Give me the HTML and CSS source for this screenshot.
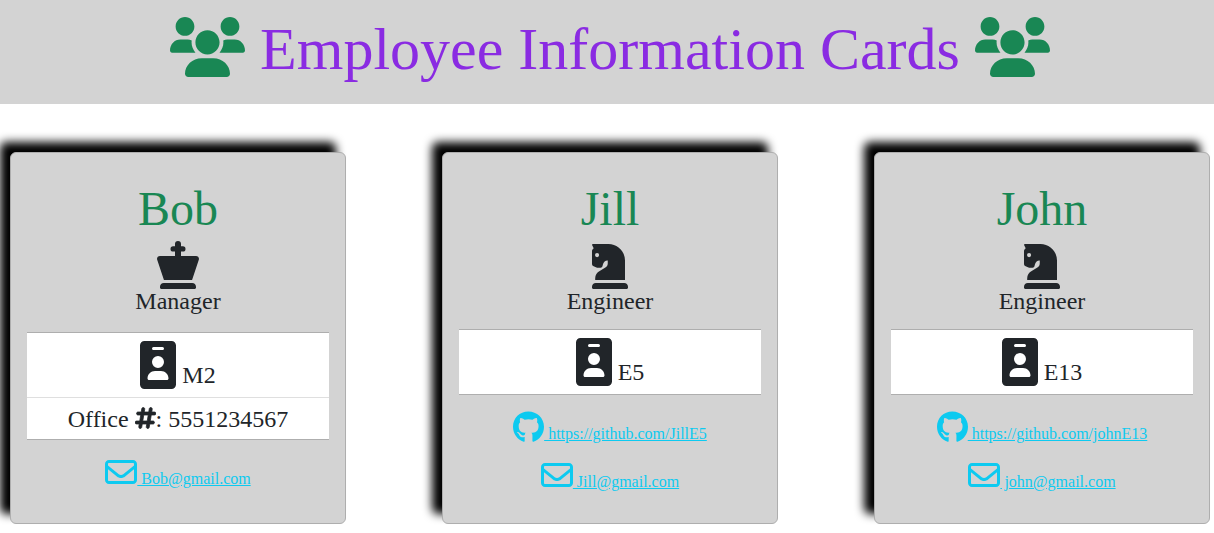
FILE: index.html
```html
<!DOCTYPE html>
<html lang="en">
<head>
<meta charset="utf-8">
<meta name="viewport" content="width=device-width, initial-scale=1">
<title>Employee Information Cards</title>
<link rel="stylesheet" href="styles.css">
</head>
<body>
<svg class="sprite" aria-hidden="true">
  <symbol id="users" viewBox="0 0 640 512"><path d="M319.9 320c57.41 0 103.1-46.56 103.1-104c0-57.44-46.54-104-103.1-104c-57.41 0-103.1 46.56-103.1 104C215.9 273.4 262.5 320 319.9 320zM369.9 352H270.1C191.6 352 128 411.7 128 485.3C128 500.1 140.7 512 156.4 512h327.2C499.3 512 512 500.1 512 485.3C512 411.7 448.4 352 369.9 352zM512 160c44.18 0 80-35.82 80-80S556.2 0 512 0c-44.18 0-80 35.82-80 80S467.8 160 512 160zM183.9 216c0-5.449 .9824-10.63 1.609-15.91C174.6 194.1 162.6 192 149.9 192H88.08C39.44 192 0 233.8 0 285.3C0 295.6 7.887 304 17.62 304h199.5C196.7 280.2 183.9 249.7 183.9 216zM128 160c44.18 0 80-35.82 80-80S172.2 0 128 0C83.82 0 48 35.82 48 80S83.82 160 128 160zM551.9 192h-61.84c-12.8 0-24.88 3.037-35.86 8.24C454.8 205.5 455.8 210.6 455.8 216c0 33.71-12.78 64.21-33.16 88h199.7C632.1 304 640 295.6 640 285.3C640 233.8 600.6 192 551.9 192z"/></symbol>
  <symbol id="king" viewBox="0 0 448 512"><path d="M192 160V112H172a28 28 0 0 1 0-56H192V32a32 32 0 0 1 64 0V56H276a28 28 0 0 1 0 56H256V160H416C438 160 453 180 446 201L374 416H74L2 201C-5 180 10 160 32 160zM72 448H376C398 448 416 466 416 488V496C416 505 409 512 400 512H48C39 512 32 505 32 496V488C32 466 50 448 72 448z"/></symbol>
  <symbol id="knight" viewBox="0 0 384 512"><path fill-rule="evenodd" d="M8 32H176C274 32 352 110 352 208V416H34V396C34 364 52 336 82 320L130 290C156 276 168 262 168 240V208C144 206 124 222 118 246L112 266C109 277 102 283 92 286H66C58 286 50 285 42 281L12 267C4 263 0 256 0 246V106C0 98 3 93 8 88L18 78L2 46C0 40 2 32 8 32zM54 128a22 22 0 1 0 0 44a22 22 0 1 0 0-44zM40 448H344C366 448 384 466 384 488V496C384 505 377 512 368 512H16C7 512 0 505 0 496V488C0 466 18 448 40 448z"/></symbol>
  <symbol id="badge" viewBox="0 0 384 512"><path fill-rule="evenodd" d="M48 0H336C363 0 384 21 384 48V464C384 491 363 512 336 512H48C21 512 0 491 0 464V48C0 21 21 0 48 0zM144 64a16 16 0 0 0 0 32H240a16 16 0 0 0 0-32zM192 160a64 64 0 1 0 0 128a64 64 0 1 0 0-128zM160 320c-44.2 0-80 35.8-80 80c0 8.8 7.2 16 16 16H288c8.8 0 16-7.2 16-16c0-44.2-35.8-80-80-80z"/></symbol>
  <symbol id="hash" viewBox="0 0 448 512"><path stroke="currentColor" stroke-width="16" d="M181.3 32.4c17.4 2.9 29.2 19.4 26.3 36.8L197.8 128h95.1l11.5-69.3c2.9-17.4 19.4-29.2 36.8-26.3s29.2 19.4 26.3 36.8L357.8 128H416c17.7 0 32 14.3 32 32s-14.3 32-32 32H347.1L325.8 320H384c17.7 0 32 14.3 32 32s-14.3 32-32 32H315.1l-11.5 69.3c-2.9 17.4-19.4 29.2-36.8 26.3s-29.2-19.4-26.3-36.8l9.8-58.7H155.1l-11.5 69.3c-2.9 17.4-19.4 29.2-36.8 26.3s-29.2-19.4-26.3-36.8L90.2 384H32c-17.7 0-32-14.3-32-32s14.3-32 32-32h68.9l21.3-128H64c-17.7 0-32-14.3-32-32s14.3-32 32-32h68.9l11.5-69.3c2.9-17.4 19.4-29.2 36.8-26.3zM187.1 192L165.8 320h95.1l21.3-128H187.1z"/></symbol>
  <symbol id="envelope" viewBox="0 0 512 512"><path fill-rule="evenodd" d="M0 128C0 92.65 28.65 64 64 64H448C483.3 64 512 92.65 512 128V384C512 419.3 483.3 448 448 448H64C28.65 448 0 419.3 0 384V128zM48 128V150.1L220.5 291.7C241.1 308.7 270.9 308.7 291.5 291.7L464 150.1V128C464 119.2 456.8 112 448 112H64C55.16 112 48 119.2 48 128zM48 212.2V384C48 392.8 55.16 400 64 400H448C456.8 400 464 392.8 464 384V212.2L322 328.8C283.6 360.3 228.4 360.3 190 328.8L48 212.2z"/></symbol>
  <symbol id="github" viewBox="0 0 496 512"><path d="M165.9 397.4c0 2-2.3 3.6-5.2 3.6-3.3.3-5.6-1.3-5.6-3.6 0-2 2.3-3.6 5.2-3.6 3-.3 5.6 1.3 5.6 3.6zM244.8 8C106.1 8 0 113.3 0 252c0 110.9 69.8 205.8 169.5 239.2 12.8 2.3 17.3-5.6 17.3-12.1 0-6.2-.3-40.4-.3-61.4 0 0-70 15-84.7-29.8 0 0-11.4-29.1-27.8-36.6 0 0-22.9-15.7 1.6-15.4 0 0 24.9 2 38.6 25.8 21.9 38.6 58.6 27.5 72.9 20.9 2.3-16 8.8-27.1 16-33.7-55.9-6.2-112.3-14.3-112.3-110.5 0-27.5 7.6-41.3 23.6-58.9-2.6-6.5-11.1-33.3 2.6-67.9 20.9-6.5 69 27 69 27 20-5.6 41.5-8.5 62.8-8.5s42.8 2.9 62.8 8.5c0 0 48.1-33.6 69-27 13.7 34.7 5.2 61.4 2.6 67.9 16 17.7 25.8 31.5 25.8 58.9 0 96.5-58.9 104.2-114.8 110.5 9.2 7.9 17 22.9 17 46.4 0 33.7-.3 75.4-.3 83.6 0 6.5 4.6 14.4 17.3 12.1C428.2 457.8 496 362.9 496 252 496 113.3 383.5 8 244.8 8z"/></symbol>
</svg>

<header class="banner">
  <h1 class="banner-title"><svg class="icon icon-users" aria-hidden="true"><use href="#users"/></svg> Employee Information Cards <svg class="icon icon-users" aria-hidden="true"><use href="#users"/></svg></h1>
</header>

<main class="team">
  <article class="card">
    <h2 class="name">Bob</h2>
    <svg class="piece piece-king" aria-hidden="true"><use href="#king"/></svg>
    <p class="role">Manager</p>
    <ul class="details details-manager">
      <li class="detail"><svg class="icon icon-badge" role="img" aria-label="ID"><use href="#badge"/></svg> M2</li>
      <li class="detail">Office <svg class="icon icon-hash" role="img" aria-label="number"><use href="#hash"/></svg>: 5551234567</li>
    </ul>
    <a class="contact" href="mailto:Bob@gmail.com"><svg class="icon icon-envelope" aria-hidden="true"><use href="#envelope"/></svg> Bob@gmail.com</a>
  </article>

  <article class="card">
    <h2 class="name">Jill</h2>
    <svg class="piece piece-knight" aria-hidden="true"><use href="#knight"/></svg>
    <p class="role">Engineer</p>
    <ul class="details">
      <li class="detail"><svg class="icon icon-badge" role="img" aria-label="ID"><use href="#badge"/></svg> E5</li>
    </ul>
    <a class="contact" href="https://github.com/JillE5"><svg class="icon icon-github" aria-hidden="true"><use href="#github"/></svg> https://github.com/JillE5</a>
    <a class="contact" href="mailto:Jill@gmail.com"><svg class="icon icon-envelope" aria-hidden="true"><use href="#envelope"/></svg> Jill@gmail.com</a>
  </article>

  <article class="card">
    <h2 class="name">John</h2>
    <svg class="piece piece-knight" aria-hidden="true"><use href="#knight"/></svg>
    <p class="role">Engineer</p>
    <ul class="details">
      <li class="detail"><svg class="icon icon-badge" role="img" aria-label="ID"><use href="#badge"/></svg> E13</li>
    </ul>
    <a class="contact" href="https://github.com/johnE13"><svg class="icon icon-github" aria-hidden="true"><use href="#github"/></svg> https://github.com/johnE13</a>
    <a class="contact" href="mailto:john@gmail.com"><svg class="icon icon-envelope" aria-hidden="true"><use href="#envelope"/></svg> john@gmail.com</a>
  </article>
</main>
</body>
</html>
```

FILE: styles.css
```css
* {
  box-sizing: border-box;
}

body {
  margin: 0;
  background: #fff;
  color: #212529;
  font-family: "Liberation Serif", "Times New Roman", serif;
  font-size: 16px;
  line-height: 24px;
}

.sprite {
  display: none;
}

.icon {
  fill: currentColor;
  vertical-align: -.125em;
}

.banner {
  padding: 13px 16px 19px 22px;
  background: lightgray;
  text-align: center;
}

.banner-title {
  margin: 0;
  color: blueviolet;
  font-size: 60px;
  font-weight: 400;
  line-height: 72px;
}

.icon-users {
  width: 75px;
  height: 60px;
  color: #198754;
}

.team {
  display: flex;
  flex-wrap: wrap;
  gap: 48px 96px;
  padding: 48px 0 8px 10px;
}

.card {
  display: flex;
  flex-direction: column;
  align-items: center;
  width: 336px;
  padding: 27px 16px 32px;
  background: lightgray;
  border: 1px solid #aeaeae;
  border-radius: 6px;
  box-shadow: -10px -10px 10px #000;
  text-align: center;
}

.name {
  margin: 0 0 3px;
  color: #198754;
  font-size: 48px;
  font-weight: 400;
  line-height: 58px;
}

.piece {
  height: 48px;
  fill: currentColor;
}

.piece-king {
  width: 42px;
}

.piece-knight {
  width: 36px;
}

.role {
  margin: 0;
  font-size: 24px;
  line-height: 25px;
}

.details {
  align-self: stretch;
  margin: 15px 0 16px;
  padding: 0;
  background: #fff;
  border: solid #aeaeae;
  border-width: 1px 0;
  list-style: none;
  font-size: 24px;
  line-height: 24px;
}

.details-manager {
  margin-top: 18px;
}

.detail {
  padding: 8px 16px;
}

.detail + .detail {
  border-top: 1px solid #dfdfdf;
}

.icon-badge {
  width: 36px;
  height: 48px;
  vertical-align: -6px;
}

.icon-hash {
  width: 21px;
  height: 24px;
}

.contact {
  color: #0dcaf0;
  line-height: 18px;
}

.contact + .contact {
  margin-top: 16px;
}

.contact .icon {
  height: 32px;
  vertical-align: -4px;
}

.icon-envelope {
  width: 32px;
}

.icon-github {
  width: 31px;
}
```
